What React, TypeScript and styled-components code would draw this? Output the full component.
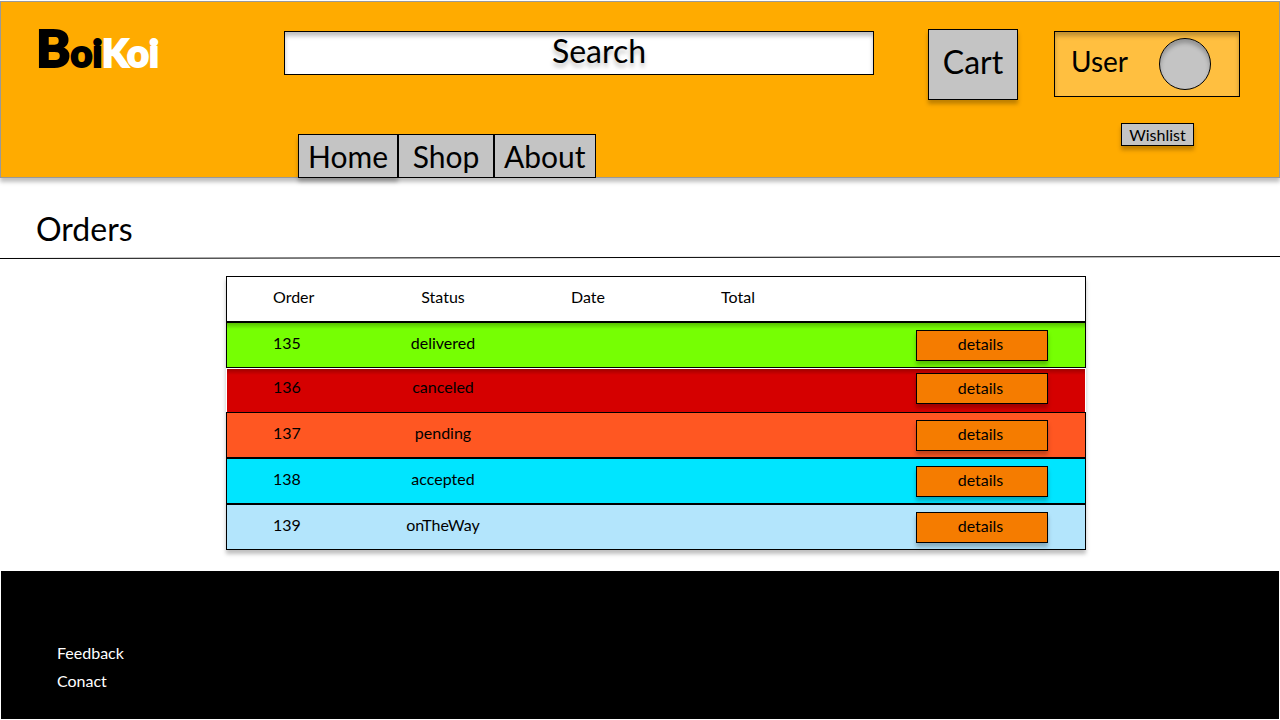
import React from "react";
import styled, { createGlobalStyle, css } from "styled-components";

const GlobalStyle = createGlobalStyle`
  *, *::before, *::after { box-sizing: border-box; }
  body {
    margin: 0;
    background: #fff;
    color: #000;
    font-family: Lato, "Open Sans", sans-serif;
    font-size: 16px;
    line-height: 20px;
  }
  button, input { font: inherit; color: inherit; }
  a { color: inherit; text-decoration: none; }
`;

const drop = "0 4px 4px rgba(0, 0, 0, 0.25)";
const inner = "inset 0 4px 4px rgba(0, 0, 0, 0.25)";

const Header = styled.header`
  display: grid;
  grid-template-columns: 248px minmax(200px, 1fr) 90px 222px;
  grid-template-rows: 105px 44px;
  grid-template-areas:
    "logo search cart account"
    ". nav . account";
  align-items: start;
  margin-top: 1px;
  padding: 27px 39px 0 35px;
  height: 177px;
  background: #ffab00;
  border: 1px solid #999;
  box-shadow: ${drop};
`;

const Logo = styled.a`
  grid-area: logo;
  font-size: 38px;
  line-height: 36px;
  font-weight: 900;
  -webkit-text-stroke: 2px currentColor;
`;

const LogoInitial = styled.span`
  font-size: 52px;
`;

const LogoLight = styled.span`
  color: #fff;
`;

const SearchForm = styled.form`
  grid-area: search;
  margin: 2px 54px 0 0;
`;

const SearchInput = styled.input`
  display: block;
  width: 100%;
  height: 44px;
  padding: 0 0 6px 40px;
  border: 1px solid #000;
  border-radius: 0;
  background: #fff;
  box-shadow: ${inner};
  font-size: 32px;
  text-align: center;
  text-shadow: ${drop};
  outline: none;

  &::placeholder {
    color: #000;
    opacity: 1;
  }
`;

const GreyButton = styled.button`
  padding: 0;
  border: 1px solid #000;
  background: #c4c4c4;
  box-shadow: ${drop};
  cursor: pointer;
`;

const CartButton = styled(GreyButton)`
  grid-area: cart;
  height: 71px;
  padding-bottom: 6px;
  font-size: 32px;
`;

const Account = styled.div`
  grid-area: account;
  display: flex;
  flex-direction: column;
  gap: 26px;
  padding: 2px 0 0 36px;
`;

const UserCard = styled.a`
  display: flex;
  align-items: center;
  justify-content: space-between;
  height: 66px;
  padding: 0 28px 0 16px;
  border: 1px solid #000;
  background: #ffbf40;
  box-shadow: ${inner};
`;

const UserName = styled.span`
  padding-bottom: 6px;
  font-size: 28px;
`;

const Avatar = styled.span`
  width: 52px;
  height: 52px;
  border: 1px solid #000;
  border-radius: 50%;
  background: #c4c4c4;
  box-shadow: ${inner};
`;

const WishlistButton = styled(GreyButton)`
  align-self: flex-end;
  width: 73px;
  height: 23px;
  margin-right: 46px;
`;

const Nav = styled.nav`
  grid-area: nav;
  display: flex;
  margin-left: 14px;
`;

const NavLink = styled.a<{ $raised?: boolean }>`
  display: flex;
  align-items: center;
  justify-content: center;
  min-width: 96px;
  height: 44px;
  padding: 0 9px;
  border: 1px solid #000;
  background: #c4c4c4;
  font-size: 30px;
  box-shadow: ${(p) => (p.$raised ? drop : "none")};
`;

const Title = styled.h1`
  margin: 0;
  padding: 27px 36px 3px;
  font-size: 32px;
  line-height: 48px;
  font-weight: 400;
`;

const Rule = styled.svg`
  display: block;
  width: 100%;
  height: 3px;
`;

const Orders = styled.div`
  margin: 17px 194px 21px 226px;
`;

const Table = styled.table`
  width: 100%;
  table-layout: fixed;
  border-collapse: separate;
  border-spacing: 0;
  box-shadow: ${drop};
`;

const Col = styled.col<{ $width?: number }>`
  width: ${(p) => (p.$width ? `${p.$width}px` : "auto")};
`;

const Row = styled.tr<{ $color: string; $open?: boolean; $shaded?: boolean }>`
  height: ${(p) => (p.$open ? 44 : 46)}px;

  > * {
    padding: 0 0 4px;
    text-align: center;
    font-weight: 400;
    background-color: ${(p) => p.$color};
    border: 0 solid #000;
    border-width: 1px 0;
    ${(p) =>
      p.$shaded &&
      css`
        background-image: linear-gradient(rgba(0, 0, 0, 0.25), rgba(0, 0, 0, 0));
        background-size: 100% 6px;
        background-repeat: no-repeat;
      `}
    ${(p) =>
      p.$open &&
      css`
        padding-bottom: 8px;
        border-color: #fff;
        border-bottom-width: 0;
      `}
  }
  > :first-child {
    padding-left: 46px;
    border-left-width: 1px;
    text-align: left;
  }
  > :last-child {
    padding-right: 37px;
    padding-bottom: ${(p) => (p.$open ? 4 : 0)}px;
    border-right-width: 1px;
    text-align: right;
  }
`;

const DetailsButton = styled.button`
  display: inline-block;
  vertical-align: middle;
  width: 132px;
  height: 31px;
  padding: 0 3px 2px 0;
  border: 1px solid #000;
  background: #f57c00;
  box-shadow: ${drop};
  cursor: pointer;
`;

const Footer = styled.footer`
  display: flex;
  flex-direction: column;
  align-items: flex-start;
  gap: 8px;
  margin: 0 1px 1px;
  padding: 72px 56px 28px;
  background: #000;
  color: #fff;
`;

const orders = [
  { id: 135, status: "delivered", color: "#76ff03", shaded: true },
  { id: 136, status: "canceled", color: "#d50000", shaded: true, open: true },
  { id: 137, status: "pending", color: "#ff5722" },
  { id: 138, status: "accepted", color: "#00e5ff" },
  { id: 139, status: "onTheWay", color: "#b3e5fc" },
];

export default function App() {
  return (
    <>
      <GlobalStyle />
      <Header>
        <Logo href="#">
          <LogoInitial>B</LogoInitial>oi<LogoLight>Koi</LogoLight>
        </Logo>
        <SearchForm role="search">
          <SearchInput type="text" placeholder="Search" aria-label="Search" />
        </SearchForm>
        <CartButton type="button">Cart</CartButton>
        <Account>
          <UserCard href="#user">
            <UserName>User</UserName>
            <Avatar />
          </UserCard>
          <WishlistButton type="button">Wishlist</WishlistButton>
        </Account>
        <Nav>
          <NavLink href="#home" $raised>Home</NavLink>
          <NavLink href="#shop">Shop</NavLink>
          <NavLink href="#about">About</NavLink>
        </Nav>
      </Header>
      <main>
        <Title>Orders</Title>
        <Rule aria-hidden="true">
          <line x1="0" y1="2.5" x2="100%" y2="0.5" stroke="#000" />
        </Rule>
        <Orders>
          <Table>
            <colgroup>
              <Col $width={144} />
              <Col $width={146} />
              <Col $width={144} />
              <Col $width={156} />
              <Col />
            </colgroup>
            <thead>
              <Row $color="#fff">
                <th scope="col">Order</th>
                <th scope="col">Status</th>
                <th scope="col">Date</th>
                <th scope="col">Total</th>
                <td />
              </Row>
            </thead>
            <tbody>
              {orders.map((o) => (
                <Row key={o.id} $color={o.color} $shaded={o.shaded} $open={o.open}>
                  <td>{o.id}</td>
                  <td>{o.status}</td>
                  <td />
                  <td />
                  <td>
                    <DetailsButton type="button">details</DetailsButton>
                  </td>
                </Row>
              ))}
            </tbody>
          </Table>
        </Orders>
      </main>
      <Footer>
        <a href="#feedback">Feedback</a>
        <a href="#contact">Conact</a>
      </Footer>
    </>
  );
}
